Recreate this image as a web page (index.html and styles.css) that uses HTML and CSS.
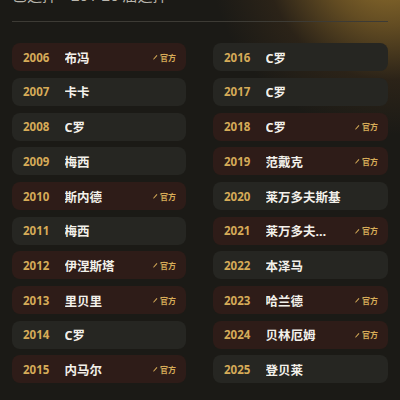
FILE: index.html
```html
<!DOCTYPE html>
<html lang="zh">
<head>
<meta charset="utf-8">
<link rel="stylesheet" href="styles.css">
</head>
<body>
<div class="glow"></div>
<main class="page">
  <div class="head"><span class="head-a">已选择</span><span class="head-b">20 / 20 届选择</span></div>
  <div class="rule"></div>
  <div class="grid">
    <div class="col">
      <div class="card off"><span class="yr">2006</span><span class="nm">布冯</span><span class="badge"><svg viewBox="0 0 6 6" class="ic"><path d="M1 5.2 L4.6 1 L5.4 1.7 L1.9 5.6 Z" fill="currentColor"/></svg>官方</span></div>
      <div class="card"><span class="yr">2007</span><span class="nm">卡卡</span></div>
      <div class="card"><span class="yr">2008</span><span class="nm">C罗</span></div>
      <div class="card"><span class="yr">2009</span><span class="nm">梅西</span></div>
      <div class="card off"><span class="yr">2010</span><span class="nm">斯内德</span><span class="badge"><svg viewBox="0 0 6 6" class="ic"><path d="M1 5.2 L4.6 1 L5.4 1.7 L1.9 5.6 Z" fill="currentColor"/></svg>官方</span></div>
      <div class="card"><span class="yr">2011</span><span class="nm">梅西</span></div>
      <div class="card off"><span class="yr">2012</span><span class="nm">伊涅斯塔</span><span class="badge"><svg viewBox="0 0 6 6" class="ic"><path d="M1 5.2 L4.6 1 L5.4 1.7 L1.9 5.6 Z" fill="currentColor"/></svg>官方</span></div>
      <div class="card off"><span class="yr">2013</span><span class="nm">里贝里</span><span class="badge"><svg viewBox="0 0 6 6" class="ic"><path d="M1 5.2 L4.6 1 L5.4 1.7 L1.9 5.6 Z" fill="currentColor"/></svg>官方</span></div>
      <div class="card"><span class="yr">2014</span><span class="nm">C罗</span></div>
      <div class="card off"><span class="yr">2015</span><span class="nm">内马尔</span><span class="badge"><svg viewBox="0 0 6 6" class="ic"><path d="M1 5.2 L4.6 1 L5.4 1.7 L1.9 5.6 Z" fill="currentColor"/></svg>官方</span></div>
    </div>
    <div class="col">
      <div class="card"><span class="yr">2016</span><span class="nm">C罗</span></div>
      <div class="card"><span class="yr">2017</span><span class="nm">C罗</span></div>
      <div class="card off"><span class="yr">2018</span><span class="nm">C罗</span><span class="badge"><svg viewBox="0 0 6 6" class="ic"><path d="M1 5.2 L4.6 1 L5.4 1.7 L1.9 5.6 Z" fill="currentColor"/></svg>官方</span></div>
      <div class="card off"><span class="yr">2019</span><span class="nm">范戴克</span><span class="badge"><svg viewBox="0 0 6 6" class="ic"><path d="M1 5.2 L4.6 1 L5.4 1.7 L1.9 5.6 Z" fill="currentColor"/></svg>官方</span></div>
      <div class="card"><span class="yr">2020</span><span class="nm">莱万多夫斯基</span></div>
      <div class="card off"><span class="yr">2021</span><span class="nm">莱万多夫斯基</span><span class="badge"><svg viewBox="0 0 6 6" class="ic"><path d="M1 5.2 L4.6 1 L5.4 1.7 L1.9 5.6 Z" fill="currentColor"/></svg>官方</span></div>
      <div class="card"><span class="yr">2022</span><span class="nm">本泽马</span></div>
      <div class="card off"><span class="yr">2023</span><span class="nm">哈兰德</span><span class="badge"><svg viewBox="0 0 6 6" class="ic"><path d="M1 5.2 L4.6 1 L5.4 1.7 L1.9 5.6 Z" fill="currentColor"/></svg>官方</span></div>
      <div class="card off"><span class="yr">2024</span><span class="nm">贝林厄姆</span><span class="badge"><svg viewBox="0 0 6 6" class="ic"><path d="M1 5.2 L4.6 1 L5.4 1.7 L1.9 5.6 Z" fill="currentColor"/></svg>官方</span></div>
      <div class="card"><span class="yr">2025</span><span class="nm">登贝莱</span></div>
    </div>
  </div>
</main>
</body>
</html>
```
FILE: styles.css
```css
html, body {
  margin: 0;
  padding: 0;
  width: 400px;
  height: 400px;
  overflow: hidden;
  background: #1b1a16;
  font-family: "Noto Sans", "Noto Sans CJK SC", sans-serif;
}
.glow {
  position: absolute;
  left: 0;
  top: 0;
  width: 400px;
  height: 400px;
  background: radial-gradient(circle at 390px -45px, rgba(165, 128, 50, 0.95) 0px, rgba(130, 98, 40, 0.7) 70px, rgba(80, 55, 28, 0.3) 125px, rgba(40, 25, 20, 0) 180px);
  pointer-events: none;
}
.page {
  position: relative;
  padding: 0 12px;
}
.head {
  margin-top: -15px;
  height: 20px;
  line-height: 20px;
  font-size: 15px;
  color: #b9b6ad;
  display: flex;
  gap: 14px;
}
.rule {
  margin-top: 16px;
  height: 1px;
  background: #3d3b35;
}
.grid {
  margin-top: 21.3px;
  display: grid;
  grid-template-columns: 174px 175px;
  column-gap: 27px;
}
.col {
  display: flex;
  flex-direction: column;
  gap: 6.7px;
}
.card {
  height: 28px;
  border-radius: 8px;
  background: #262622;
  display: flex;
  align-items: center;
  padding: 0 10px 0 11px;
  box-sizing: border-box;
}
.card.off {
  background: #2e1c18;
}
.yr {
  width: 41.5px;
  flex: none;
  color: #d6ab58;
  font-weight: 700;
  font-size: 11.5px;
}
.nm {
  flex: 1;
  min-width: 0;
  overflow: hidden;
  white-space: nowrap;
  text-overflow: ellipsis;
  color: #f2f0ea;
  font-weight: 700;
  font-size: 12.5px;
}
.badge {
  flex: none;
  margin-left: 22px;
  display: flex;
  align-items: center;
  gap: 2px;
  color: #d6ab58;
  font-weight: 700;
  font-size: 8px;
}
.ic {
  width: 6px;
  height: 6px;
}
```
